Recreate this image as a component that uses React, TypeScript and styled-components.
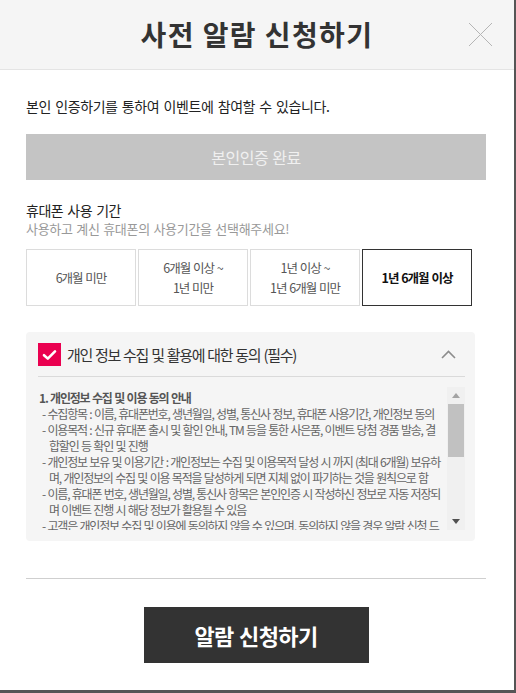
import styled, { createGlobalStyle } from "styled-components";

const GlobalStyle = createGlobalStyle`
  html, body {
    margin: 0;
    padding: 0;
    background: #555;
  }
  body {
    font-family: "Noto Sans CJK KR", "Noto Sans", sans-serif;
    color: #222;
  }
`;

const periods = [
  { id: 1, lines: ["6개월 미만"] },
  { id: 2, lines: ["6개월 이상 ~", "1년 미만"] },
  { id: 3, lines: ["1년 이상 ~", "1년 6개월 미만"] },
  { id: 4, lines: ["1년 6개월 이상"] },
];

const terms = [
  ["- 수집항목 : 이름, 휴대폰번호, 생년월일, 성별, 통신사 정보, 휴대폰 사용기간, 개인정보 동의"],
  [
    "- 이용목적 : 신규 휴대폰 출시 및 할인 안내, TM 등을 통한 사은품, 이벤트 당첨 경품 발송, 결",
    "합할인 등 확인 및 진행",
  ],
  [
    "- 개인정보 보유 및 이용기간 : 개인정보는 수집 및 이용목적 달성 시 까지 (최대 6개월) 보유하",
    "며, 개인정보의 수집 및 이용 목적을 달성하게 되면 지체 없이 파기하는 것을 원칙으로 함",
  ],
  [
    "- 이름, 휴대폰 번호, 생년월일, 성별, 통신사 항목은 본인인증 시 작성하신 정보로 자동 저장되",
    "며 이벤트 진행 시 해당 정보가 활용될 수 있음",
  ],
  [
    "- 고객은 개인정보 수집 및 이용에 동의하지 않을 수 있으며, 동의하지 않을 경우 알람 신청 드",
    "릴 수 없습니다.",
  ],
];

export default function App() {
  const selected = 4;
  return (
    <>
      <GlobalStyle />
      <Modal>
        <Header>
          <span />
          <Title>사전 알람 신청하기</Title>
          <Close aria-label="닫기">
            <svg width="25" height="25" viewBox="0 0 25 25">
              <path d="M1 1L24 24M24 1L1 24" stroke="#b5b5b5" strokeWidth="1" fill="none" />
            </svg>
          </Close>
        </Header>

        <Body>
          <Intro>본인 인증하기를 통하여 이벤트에 참여할 수 있습니다.</Intro>
          <VerifyButton disabled>본인인증 완료</VerifyButton>

          <SectionTitle>휴대폰 사용 기간</SectionTitle>
          <SectionHint>사용하고 계신 휴대폰의 사용기간을 선택해주세요!</SectionHint>

          <Options>
            {periods.map((p) => (
              <Option key={p.id} $active={p.id === selected}>
                {p.lines.map((l) => (
                  <OptionLine key={l}>{l}</OptionLine>
                ))}
              </Option>
            ))}
          </Options>

          <AgreePanel>
            <AgreeHead>
              <Check>
                <svg width="15" height="12" viewBox="0 0 15 12">
                  <path d="M2 6.2L5.8 9.6L13 2.4" stroke="#fff" strokeWidth="2.6" fill="none" strokeLinecap="round" strokeLinejoin="round" />
                </svg>
              </Check>
              <AgreeLabel>개인 정보 수집 및 활용에 대한 동의 (필수)</AgreeLabel>
              <svg width="15" height="9" viewBox="0 0 15 9">
                <path d="M1 8L7.5 1.5L14 8" stroke="#8c8c8c" strokeWidth="1.6" fill="none" />
              </svg>
            </AgreeHead>

            <TermsBox>
              <TermsText>
                <TermsTitle>1. 개인정보 수집 및 이용 동의 안내</TermsTitle>
                {terms.map((item, i) => (
                  <TermItem key={i}>
                    {item.map((line, j) => (
                      <TermLine key={j} $wrapped={j > 0}>
                        {line}
                      </TermLine>
                    ))}
                  </TermItem>
                ))}
              </TermsText>
              <ScrollTrack>
                <Arrow $dir="up" />
                <Thumb />
                <TrackSpace />
                <Arrow $dir="down" />
              </ScrollTrack>
            </TermsBox>
          </AgreePanel>

          <Divider />
          <Footer>
            <SubmitButton>알람 신청하기</SubmitButton>
          </Footer>
        </Body>
      </Modal>
    </>
  );
}

const Modal = styled.div`
  width: 514px;
  height: 690px;
  background: #fff;
  display: flex;
  flex-direction: column;
  overflow: hidden;
`;

const Header = styled.header`
  height: 69px;
  flex-shrink: 0;
  background: #f5f5f5;
  border-bottom: 1px solid #e4e4e4;
  display: grid;
  grid-template-columns: 1fr auto 1fr;
  align-items: center;
`;

const Title = styled.h1`
  margin: 0;
  font-size: 28px;
  font-weight: 700;
  letter-spacing: 1.4px;
  color: #333;
  line-height: 1;
  padding-bottom: 1px;
`;

const Close = styled.button`
  justify-self: end;
  margin-right: 21px;
  padding: 0;
  border: 0;
  background: none;
  display: flex;
  cursor: pointer;
`;

const Body = styled.div`
  padding: 0 28px 0 26px;
  display: flex;
  flex-direction: column;
`;

const Intro = styled.p`
  margin: 26px 0 0;
  font-size: 14px;
  line-height: 20px;
  letter-spacing: -0.4px;
  word-spacing: 1.5px;
  color: #222;
`;

const VerifyButton = styled.button`
  margin-top: 18px;
  height: 46px;
  border: 0;
  background: #c4c4c4;
  color: #f0f0f0;
  font-family: inherit;
  font-size: 16px;
  letter-spacing: -0.5px;
  word-spacing: 1px;
`;

const SectionTitle = styled.h2`
  margin: 21px 0 0;
  font-size: 14px;
  font-weight: 400;
  line-height: 18px;
  letter-spacing: -0.5px;
  word-spacing: 1.5px;
  color: #222;
`;

const SectionHint = styled.p`
  margin: 1px 0 0;
  font-size: 13px;
  line-height: 18px;
  letter-spacing: -0.3px;
  word-spacing: 1px;
  color: #999;
`;

const Options = styled.div`
  margin-top: 11px;
  display: grid;
  grid-template-columns: repeat(4, 110px);
  gap: 2px;
`;

const Option = styled.div<{ $active?: boolean }>`
  height: 57px;
  box-sizing: border-box;
  border: 1px solid ${(p) => (p.$active ? "#333" : "#dcdcdc")};
  display: flex;
  flex-direction: column;
  align-items: center;
  justify-content: center;
  font-size: 12.5px;
  letter-spacing: -1px;
  word-spacing: 1px;
  color: ${(p) => (p.$active ? "#111" : "#555")};
  font-weight: ${(p) => (p.$active ? 700 : 400)};
  cursor: pointer;
`;

const OptionLine = styled.span`
  display: block;
  line-height: 20px;
  height: 20px;
`;

const AgreePanel = styled.section`
  margin-top: 26px;
  width: 449px;
  background: #f5f5f5;
  border-radius: 4px;
  padding: 11px 10px 11px 12px;
  box-sizing: border-box;
`;

const AgreeHead = styled.div`
  display: flex;
  align-items: center;
  gap: 6px;
  padding-bottom: 10px;
  border-bottom: 1px solid #dadada;
  padding-right: 9px;
`;

const Check = styled.span`
  width: 23px;
  height: 23px;
  flex-shrink: 0;
  background: #ea0050;
  display: flex;
  align-items: center;
  justify-content: center;
`;

const AgreeLabel = styled.span`
  flex: 1;
  font-size: 15px;
  line-height: 20px;
  letter-spacing: -1.3px;
  word-spacing: 1px;
  color: #333;
`;

const TermsBox = styled.div`
  margin-top: 10px;
  height: 143px;
  display: flex;
  overflow: hidden;
`;

const TermsText = styled.div`
  flex: 1;
  overflow: hidden;
  padding: 3px 0 0 1px;
  color: #666;
  font-size: 12px;
  line-height: 16px;
  letter-spacing: -1.2px;
  word-spacing: 1px;
  white-space: nowrap;
`;

const TermsTitle = styled.div`
  font-weight: 700;
  color: #555;
`;

const TermItem = styled.div`
  padding-left: 3px;
`;

const TermLine = styled.div<{ $wrapped?: boolean }>`
  padding-left: ${(p) => (p.$wrapped ? "7px" : "0")};
`;

const ScrollTrack = styled.div`
  width: 18px;
  flex-shrink: 0;
  background: #f0f0f0;
  display: flex;
  flex-direction: column;
  align-items: center;
`;

const Arrow = styled.span<{ $dir: "up" | "down" }>`
  height: 17px;
  width: 18px;
  display: flex;
  align-items: center;
  justify-content: center;
  flex-shrink: 0;
  &::before {
    content: "";
    border-left: 4.5px solid transparent;
    border-right: 4.5px solid transparent;
    ${(p) =>
      p.$dir === "up"
        ? "border-bottom: 5px solid #a3a3a3;"
        : "border-top: 5px solid #505050;"}
  }
`;

const Thumb = styled.span`
  width: 16px;
  height: 53px;
  background: #c1c1c1;
  flex-shrink: 0;
`;

const TrackSpace = styled.span`
  flex: 1;
`;

const Divider = styled.hr`
  margin: 37px 0 0;
  border: 0;
  border-top: 1px solid #cfcfcf;
  width: 460px;
`;

const Footer = styled.div`
  display: flex;
  justify-content: center;
  padding-top: 28px;
`;

const SubmitButton = styled.button`
  width: 225px;
  height: 56px;
  border: 0;
  background: #333;
  color: #fff;
  font-family: inherit;
  font-size: 22px;
  font-weight: 700;
  letter-spacing: -0.6px;
  word-spacing: 1px;
  cursor: pointer;
`;
